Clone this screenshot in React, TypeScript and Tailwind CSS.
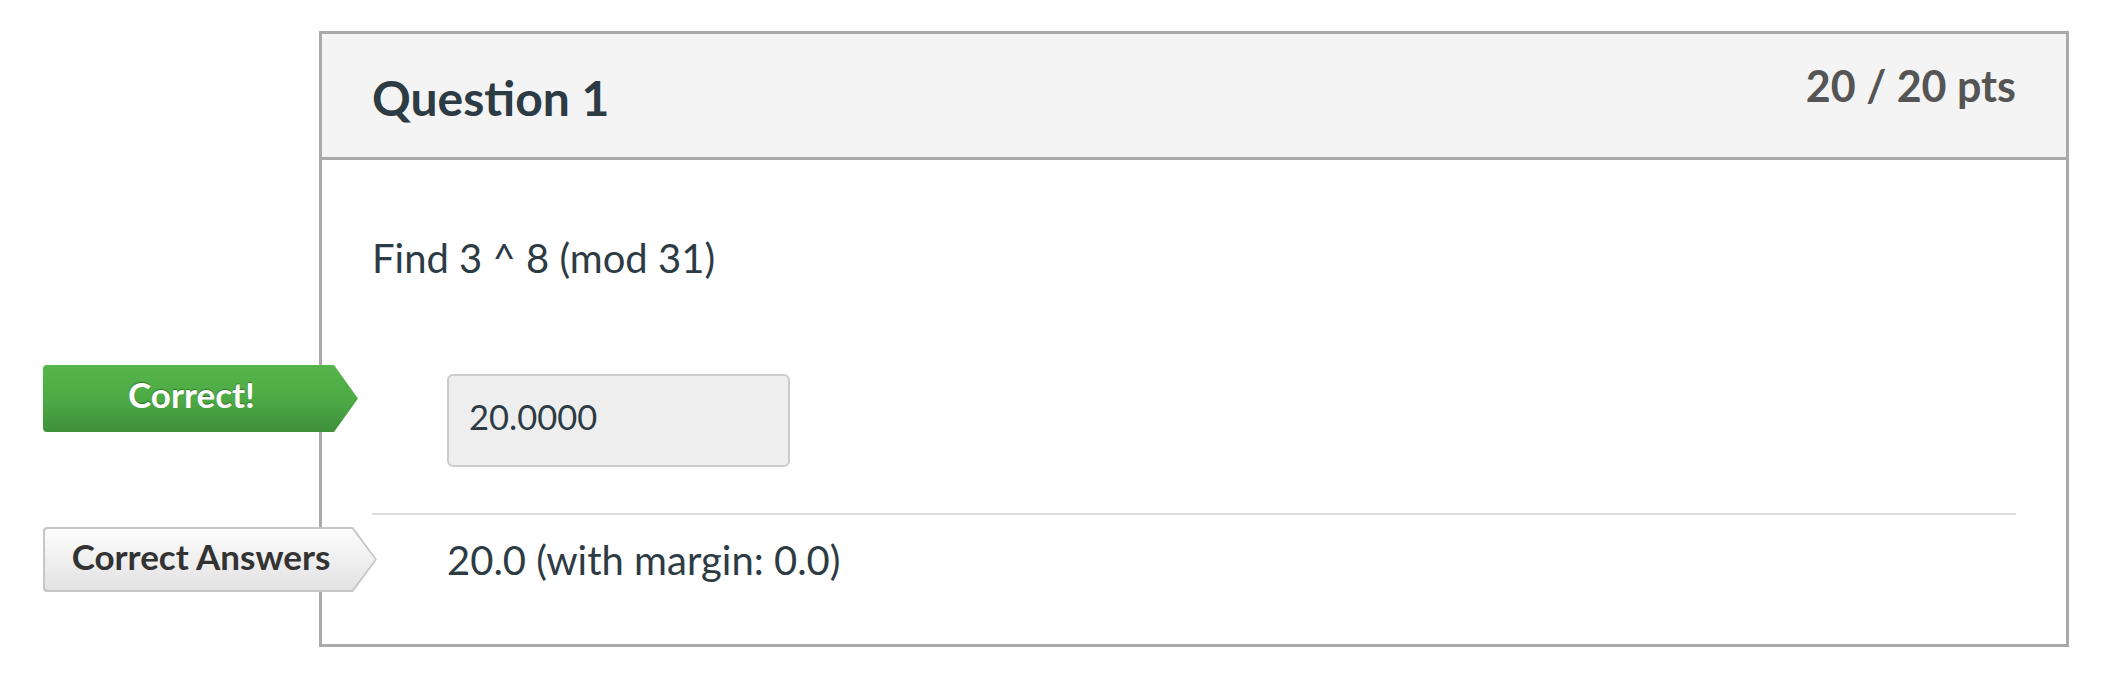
import React from "react";

const arrowClip =
  "[clip-path:polygon(0_0,calc(100%-24px)_0,100%_50%,calc(100%-24px)_100%,0_100%)]";

const CorrectBadge = () => (
  <div className="absolute left-[-329px] top-[-9px] h-[67px] w-[315px]">
    <div
      className={`absolute inset-0 rounded-l-[4px] bg-gradient-to-b from-[#56b44b] via-[#4dab45] to-[#3f8f3b] ${arrowClip}`}
    />
    <div className="relative flex h-full w-[297px] items-center justify-center pb-[9px] text-[35px] font-bold text-white [text-shadow:0_-1px_1px_rgba(0,0,0,0.35)]">
      Correct!
    </div>
  </div>
);

const AnswersBadge = () => (
  <div className="absolute left-[-329px] top-[-1px] h-[65px] w-[334px]">
    <div
      className={`absolute inset-0 rounded-l-[4px] bg-[#c6c6c6] ${arrowClip}`}
    />
    <div className="absolute inset-[2px] rounded-l-[3px] bg-gradient-to-b from-[#fdfdfd] to-[#e2e2e2] [clip-path:polygon(0_0,calc(100%-23px)_0,100%_50%,calc(100%-23px)_100%,0_100%)]" />
    <div className="relative flex h-full w-[316px] items-center justify-center pb-[7px] text-[35px] font-bold text-[#333]">
      Correct Answers
    </div>
  </div>
);

export default function App() {
  return (
    <div className="min-h-screen bg-white pl-[319px] pt-[31px] font-['Lato',sans-serif] text-[#2d3b45]">
      <div className="w-[1750px] border-[3px] border-[#aaa] bg-white">
        <div className="flex h-[126px] items-start justify-between border-b-[3px] border-[#aaa] bg-[#f4f4f4] px-[50px]">
          <h2 className="mt-[40px] text-[48px] font-bold leading-none">Question 1</h2>
          <div className="mt-[30px] text-[43px] font-bold leading-none text-[#555]">
            20 / 20 pts
          </div>
        </div>

        <div className="px-[50px] pb-[51px] pt-[68px]">
          <p className="text-[40px] leading-[60px]">Find 3 ^ 8 (mod 31)</p>

          <div className="relative mt-[86px] flex h-[93px] pl-[75px]">
            <CorrectBadge />
            <div className="flex h-[93px] w-[343px] items-center rounded-[6px] border-2 border-[#ccc] bg-[#eee] px-[20px] pb-[8px] text-[34.5px]">
              20.0000
            </div>
          </div>

          <div className="mt-[46px] h-[2px] bg-[#ddd]" />

          <div className="relative mt-[13px] flex h-[65px] items-center pl-[75px] pb-[2px]">
            <AnswersBadge />
            <span className="text-[40px] leading-[60px]">20.0 (with margin: 0.0)</span>
          </div>
        </div>
      </div>
    </div>
  );
}
